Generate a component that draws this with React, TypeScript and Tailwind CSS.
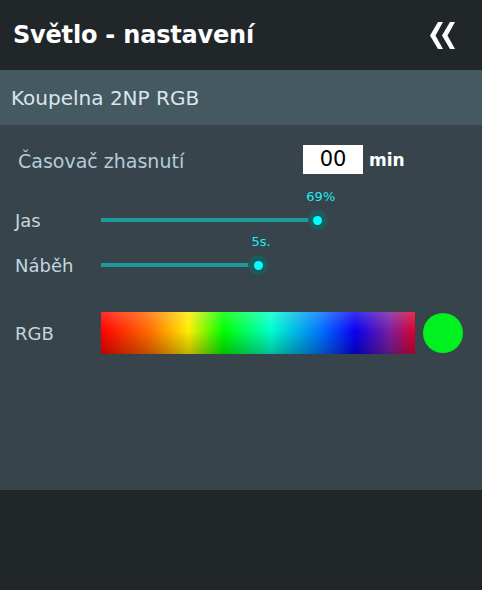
import React from "react";

const FONT = "font-['DejaVu_Sans',sans-serif]";

/* slider row: label, filled track up to the thumb, value bubble above */
function SliderRow({ label, pct, value, h }: { label: string; pct: number; value: string; h: string }) {
  return (
    <div className={`flex items-center ${h}`}>
      <div className="w-[101px] pl-[15px] text-[18px] text-[#c3d6df]">{label}</div>
      <div className="relative w-[314px] h-[20px]">
        <div className="absolute left-0 top-[8px] h-[4px] bg-[#1b9c9c]" style={{ width: `${pct}%` }} />
        <div
          className="absolute top-0 -ml-[10px] w-[20px] h-[20px] rounded-full bg-[#1d5b5d] flex items-center justify-center"
          style={{ left: `${pct}%` }}
        >
          <div className="w-[9px] h-[9px] rounded-full bg-[#00ffff]" />
        </div>
        <div
          className="absolute -top-[20px] -translate-x-1/2 text-[13px] leading-none text-[#19f0f0]"
          style={{ left: `${pct + 1}%` }}
        >
          {value}
        </div>
      </div>
    </div>
  );
}

function Chevrons() {
  return (
    <svg width="26" height="27" viewBox="0 0 26 27">
      <polygon points="8,0 13,0 5.5,13.5 13,27 8,27 0,13.5" fill="#ffffff" />
      <polygon points="20,0 25,0 17.5,13.5 25,27 20,27 12,13.5" fill="#ffffff" />
    </svg>
  );
}

export default function App() {
  return (
    <div className={`w-[482px] h-[590px] flex flex-col ${FONT}`}>
      <div className="h-[70px] shrink-0 bg-[#212629] flex items-center justify-between pl-[13px] pr-[26px]">
        <div className="text-[24px] font-bold text-white tracking-[-0.2px]">Světlo - nastavení</div>
        <Chevrons />
      </div>

      <div className="h-[55px] shrink-0 bg-[#445960] flex items-center pl-[11px] text-[20px] text-[#dbe6eb]">
        Koupelna 2NP RGB
      </div>

      <div className="h-[365px] shrink-0 bg-[#38444b] flex flex-col">
        <div className="flex items-center h-[29px] mt-[20px]">
          <div className="w-[303px] pl-[18px] pt-[3px] text-[19px] text-[#b4cdd9]">Časovač zhasnutí</div>
          <div className="w-[60px] h-[29px] bg-white flex items-center justify-center text-[21px] text-black">00</div>
          <div className="ml-[6px] pt-[2px] text-[17px] font-bold text-white">min</div>
        </div>

        <SliderRow label="Jas" pct={69} value="69%" h="h-[44px] mt-[24px]" />
        <SliderRow label="Náběh" pct={50} value="5s." h="h-[46px]" />

        <div className="flex items-center h-[42px] mt-[24px]">
          <div className="w-[101px] pl-[15px] text-[18px] text-[#c3d6df]">RGB</div>
          <div className="relative w-[314px] h-[42px] bg-[linear-gradient(to_right,#ff0000_0%,#ff6a00_15%,#ffee00_28%,#00ff00_39%,#00ffcc_54%,#0072ff_70%,#0a00f0_81%,#7a1fa0_92%,#e0002c_100%)]">
            <div className="absolute inset-0 bg-[linear-gradient(to_bottom,rgba(255,255,255,0.18),rgba(255,255,255,0)_45%,rgba(0,0,0,0.25))]" />
          </div>
          <div className="ml-[8px] w-[40px] h-[40px] rounded-full bg-[#00f020]" />
        </div>
      </div>

      <div className="flex-1 bg-[#212629]" />
    </div>
  );
}
